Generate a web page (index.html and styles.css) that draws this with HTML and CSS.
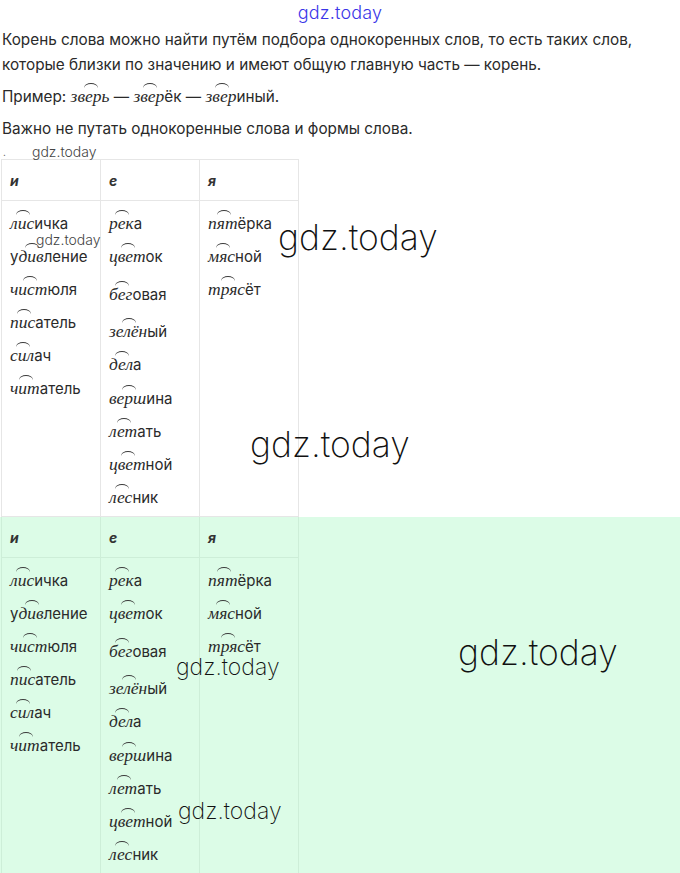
FILE: index.html
```html
<!DOCTYPE html>
<html lang="ru">
<head>
<meta charset="utf-8">
<link rel="stylesheet" href="styles.css">
</head>
<body>
<div class="page">
  <div class="wm-top">gdz.today</div>
  <p class="txt">Корень слова можно найти путём подбора однокоренных слов, то есть таких слов, которые близки по значению и имеют общую главную часть — корень.</p>
  <p class="txt">Пример: <i class="r">зверь</i> — <i class="r">звер</i>ёк — <i class="r">звер</i>иный.</p>
  <p class="txt">Важно не путать однокоренные слова и формы слова.</p>
  <div class="dot">.</div>

  <div class="block">
    <table class="tbl">
      <tr class="head"><th>и</th><th>е</th><th>я</th></tr>
      <tr class="body">
        <td>
          <div class="w"><i class="r">лис</i>ичка</div>
          <div class="w">у<i class="r">див</i>ление</div>
          <div class="w"><i class="r">чист</i>юля</div>
          <div class="w"><i class="r">пис</i>атель</div>
          <div class="w"><i class="r">сил</i>ач</div>
          <div class="w"><i class="r">чит</i>атель</div>
        </td>
        <td>
          <div class="w"><i class="r">рек</i>а</div>
          <div class="w"><i class="r">цвет</i>ок</div>
          <div class="w m5"><i class="r">бег</i>овая</div>
          <div class="w m4"><i class="r">зелён</i>ый</div>
          <div class="w"><i class="r">дел</i>а</div>
          <div class="w m1"><i class="r">верш</i>ина</div>
          <div class="w"><i class="r">лет</i>ать</div>
          <div class="w"><i class="r">цвет</i>ной</div>
          <div class="w"><i class="r">лес</i>ник</div>
        </td>
        <td>
          <div class="w"><i class="r">пят</i>ёрка</div>
          <div class="w"><i class="r">мяс</i>ной</div>
          <div class="w"><i class="r">тряс</i>ёт</div>
        </td>
      </tr>
    </table>
  </div>

  <div class="block green">
    <table class="tbl">
      <tr class="head"><th>и</th><th>е</th><th>я</th></tr>
      <tr class="body">
        <td>
          <div class="w"><i class="r">лис</i>ичка</div>
          <div class="w">у<i class="r">див</i>ление</div>
          <div class="w"><i class="r">чист</i>юля</div>
          <div class="w"><i class="r">пис</i>атель</div>
          <div class="w"><i class="r">сил</i>ач</div>
          <div class="w"><i class="r">чит</i>атель</div>
        </td>
        <td>
          <div class="w"><i class="r">рек</i>а</div>
          <div class="w"><i class="r">цвет</i>ок</div>
          <div class="w m5"><i class="r">бег</i>овая</div>
          <div class="w m4"><i class="r">зелён</i>ый</div>
          <div class="w"><i class="r">дел</i>а</div>
          <div class="w m1"><i class="r">верш</i>ина</div>
          <div class="w"><i class="r">лет</i>ать</div>
          <div class="w"><i class="r">цвет</i>ной</div>
          <div class="w"><i class="r">лес</i>ник</div>
        </td>
        <td>
          <div class="w"><i class="r">пят</i>ёрка</div>
          <div class="w"><i class="r">мяс</i>ной</div>
          <div class="w"><i class="r">тряс</i>ёт</div>
        </td>
      </tr>
    </table>
  </div>

  <div class="wm wm-s wm1">gdz.today</div>
  <div class="wm wm-s wm2">gdz.today</div>
  <div class="wm wm-l wm3">gdz.today</div>
  <div class="wm wm-l wm4">gdz.today</div>
  <div class="wm wm-l wm5">gdz.today</div>
  <div class="wm wm-m wm6">gdz.today</div>
  <div class="wm wm-m wm7">gdz.today</div>
</div>
</body>
</html>
```

FILE: styles.css
```css
html, body {
  margin: 0;
  padding: 0;
  background: #fff;
}
.page {
  position: relative;
  font-family: "Inter", "Liberation Sans", sans-serif;
  color: #2a2a2a;
  height: 873px;
  overflow: hidden;
}
.wm-top {
  text-align: center;
  color: #3a35e8;
  font-family: "Inter", "DejaVu Sans", sans-serif;
  font-weight: 300;
  font-size: 18px;
  line-height: 26px;
  height: 27px;
  letter-spacing: 0.2px;
}
.txt {
  margin: 0 0 7px;
  padding-left: 2px;
  font-size: 15.3px;
  line-height: 25px;
  padding-right: 30px;
}
.dot {
  font-size: 10px;
  line-height: 8px;
  height: 8px;
  padding-left: 3px;
  margin-top: 2px;
  margin-bottom: 3px;
  color: #555;
}
.r {
  position: relative;
  font-family: "Liberation Serif", serif;
  font-style: italic;
  font-size: 17.5px;
}
.r::before {
  content: "";
  position: absolute;
  left: 50%;
  top: -3px;
  width: 14px;
  height: 4px;
  margin-left: -6px;
  border-top: 1.3px solid #3a3a3a;
  border-radius: 50% 50% 0 0 / 100% 100% 0 0;
}
.block {
  padding-left: 1px;
}
.green {
  background: #dcfce7;
}
.tbl {
  border-collapse: collapse;
  table-layout: fixed;
  width: 297px;
}
.tbl th, .tbl td {
  border: 1px solid #e6e6e6;
  text-align: left;
  vertical-align: top;
  width: 90px;
  padding: 0 0 0 8px;
}
.green .tbl th, .green .tbl td {
  border-color: #cdeed8;
}
.green .tbl tr.head th {
  border-top: none;
}
.head th {
  height: 40px;
  font-size: 14px;
  font-weight: 700;
  font-style: italic;
  vertical-align: middle;
  color: #333;
}
.body td {
  height: 309px;
  padding-top: 6px;
}
.w {
  height: 33px;
  line-height: 33px;
  font-size: 15px;
  white-space: nowrap;
}
.m5 { margin-top: 5px; }
.m4 { margin-top: 4px; }
.m1 { margin-top: 1px; }

.wm {
  position: absolute;
  font-family: "Inter", "DejaVu Sans", sans-serif;
  font-weight: 200;
  color: #111;
  white-space: nowrap;
  line-height: 1;
}
.wm-s { font-size: 14px; color: #444; font-weight: 300; }
.wm-l { font-size: 35.5px; }
.wm-m { font-size: 23px; }
.wm1 { left: 32px; top: 145px; }
.wm2 { left: 36px; top: 233px; }
.wm3 { left: 278px; top: 220px; }
.wm4 { left: 250px; top: 427px; }
.wm5 { left: 458px; top: 635px; }
.wm6 { left: 176px; top: 656px; }
.wm7 { left: 178px; top: 800px; }
```
